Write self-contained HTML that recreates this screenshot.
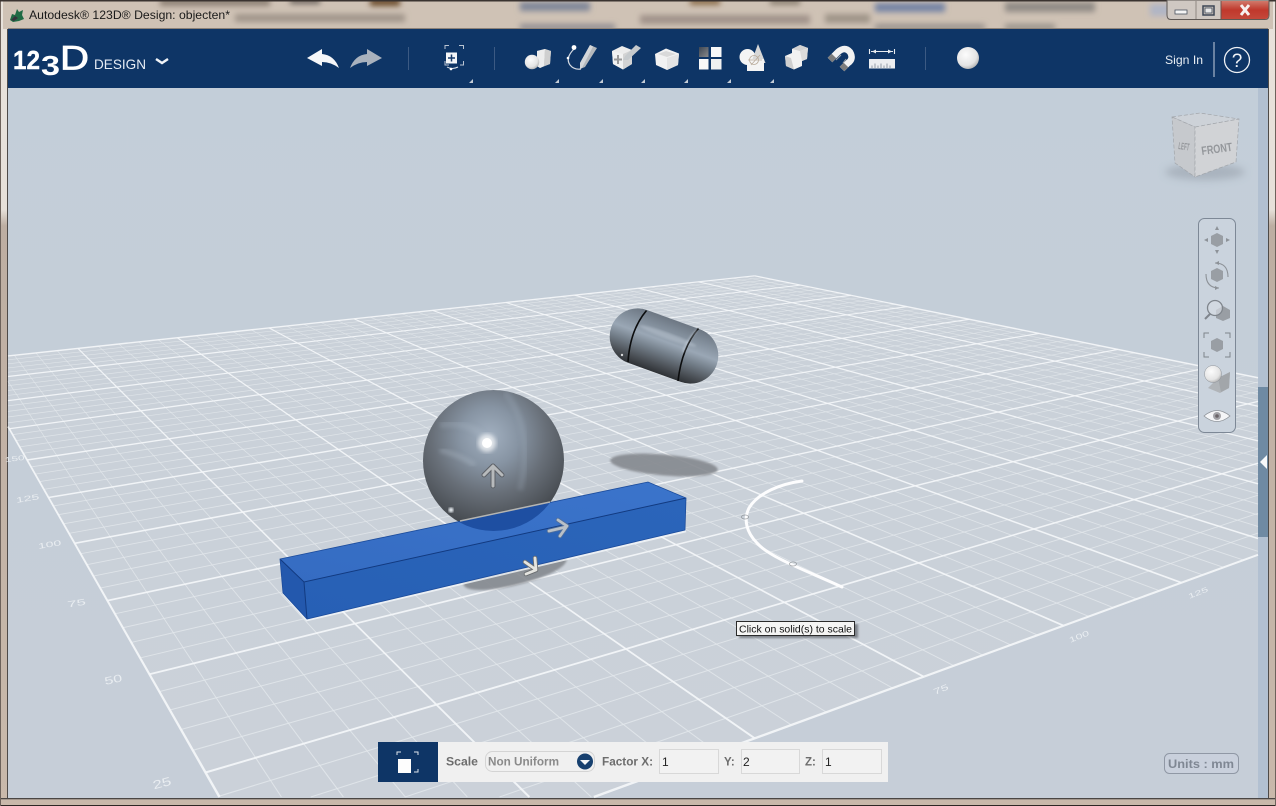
<!DOCTYPE html>
<html><head><meta charset="utf-8"><title>Autodesk 123D Design</title>
<style>
html,body{margin:0;padding:0;background:#c9b9ab;width:1276px;height:806px;overflow:hidden}
svg{display:block;position:absolute;left:0;top:0}
#root{filter:blur(.35px)}
text{font-family:"Liberation Sans",sans-serif}
</style></head><body>
<svg id="root" xmlns="http://www.w3.org/2000/svg" width="1276" height="806" viewBox="0 0 1276 806">
<defs>
<linearGradient id="frame" x1="0" y1="0" x2="0" y2="1"><stop offset="0" stop-color="#e8e2db"/><stop offset=".26" stop-color="#e6e0d9"/><stop offset=".28" stop-color="#bdaea2"/><stop offset="1" stop-color="#c9b9ab"/></linearGradient>
<linearGradient id="vp" x1="0" y1="0" x2="0" y2="1"><stop offset="0" stop-color="#c3ced9"/><stop offset=".5" stop-color="#c5ced8"/><stop offset="1" stop-color="#c6ced8"/></linearGradient>
<radialGradient id="sph" cx=".47" cy=".33" r=".74"><stop offset="0" stop-color="#a2b0c0"/><stop offset=".28" stop-color="#8794a3"/><stop offset=".55" stop-color="#686f78"/><stop offset=".8" stop-color="#4d5258"/><stop offset="1" stop-color="#35383c"/></radialGradient>
<linearGradient id="cap" x1="0" y1="0" x2="0" y2="1"><stop offset="0" stop-color="#6d7783"/><stop offset=".2" stop-color="#828e9b"/><stop offset=".42" stop-color="#9aa7b5"/><stop offset=".62" stop-color="#737e89"/><stop offset=".85" stop-color="#4a4f55"/><stop offset="1" stop-color="#2f3236"/></linearGradient>
<linearGradient id="topf" x1="0" y1="1" x2="1" y2="0"><stop offset="0" stop-color="#356cc2"/><stop offset="1" stop-color="#3b74cb"/></linearGradient>
<linearGradient id="frontf" x1="0" y1="1" x2="1" y2="0"><stop offset="0" stop-color="#2760b5"/><stop offset="1" stop-color="#2b65ba"/></linearGradient>
<radialGradient id="ball" cx=".4" cy=".35" r=".7"><stop offset="0" stop-color="#fcfcfc"/><stop offset=".7" stop-color="#e4e4e4"/><stop offset="1" stop-color="#aeaeae"/></radialGradient>
<linearGradient id="tl" x1="0" y1="0" x2="1" y2="1"><stop offset="0" stop-color="#3d4653"/><stop offset="1" stop-color="#8a8a8a"/></linearGradient>
<linearGradient id="close" x1="0" y1="0" x2="0" y2="1"><stop offset="0" stop-color="#d0796a"/><stop offset=".5" stop-color="#c0382c"/><stop offset="1" stop-color="#c4483a"/></linearGradient>
<filter id="b1"><feGaussianBlur stdDeviation="1"/></filter>
<filter id="b2"><feGaussianBlur stdDeviation="2"/></filter>
<filter id="b3" x="-20%" y="-100%" width="140%" height="300%"><feGaussianBlur stdDeviation="3"/></filter>
<filter id="b4" x="-30%" y="-100%" width="160%" height="300%"><feGaussianBlur stdDeviation="4"/></filter>
<clipPath id="tb"><rect x="3" y="1" width="1270" height="28"/></clipPath>
<clipPath id="sphclip"><circle cx="493.500" cy="460.500" r="70.500"/></clipPath>
</defs>

<!-- window frame -->
<rect width="1276" height="806" fill="url(#frame)"/>
<rect x="0" y="805" width="1276" height="1" fill="#2e2825"/>
<rect x="0" y="798" width="1276" height="1.300" fill="#4a4644"/>
<rect x="0" y="0" width="1" height="806" fill="#6d625b"/>
<rect x="1275" y="0" width="1" height="806" fill="#6d625b"/>

<!-- blurred title bar content -->
<g clip-path="url(#tb)">
<rect x="0" y="0" width="1276" height="29" fill="#cfc2b5"/>
<g filter="url(#b3)">
<rect x="160" y="-2" width="110" height="8" fill="#8f8276"/>
<rect x="290" y="-2" width="30" height="6" fill="#6f6660"/>
<rect x="370" y="-2" width="30" height="8" fill="#6d4d2d"/>
<rect x="235" y="14" width="170" height="8" fill="#a0958a"/>
<rect x="520" y="2" width="70" height="9" fill="#7f8698"/>
<rect x="520" y="24" width="95" height="6" fill="#8f8c92"/>
<rect x="640" y="15" width="170" height="9" fill="#a0938a"/>
<rect x="825" y="14" width="45" height="9" fill="#9f9488"/>
<rect x="875" y="3" width="70" height="9" fill="#7583a4"/>
<rect x="1005" y="2" width="90" height="10" fill="#918b86"/>
<rect x="875" y="24" width="110" height="6" fill="#97918c"/>
<rect x="1005" y="24" width="50" height="6" fill="#97928a"/>
<rect x="690" y="-2" width="30" height="7" fill="#8d6f4e"/>
<rect x="770" y="-2" width="30" height="7" fill="#8f8476"/>
<rect x="1150" y="4" width="20" height="12" fill="#b0b5c5"/>
</g>
</g>
<rect x="0" y="0" width="1276" height="1.500" fill="#3a3330"/>
<rect x="8" y="28" width="1260" height="1" fill="#8d8278"/>

<!-- title -->
<g>
<path d="M10 20 L12 14 L15 15 L17 9 L19 12 L23 10 L22 15 L24 19 L19 21 L13 22Z" fill="#1f6b45"/>
<path d="M11 20 L15 16 L18 18 L14 21Z" fill="#34343c"/>
<text x="29" y="19" font-size="12" textLength="201" lengthAdjust="spacingAndGlyphs" fill="#1a1a1a">Autodesk® 123D® Design: objecten*</text>
</g>

<!-- window buttons -->
<g>
<path d="M1167 0 H1269 V15 Q1269 19.500 1265 19.500 H1171 Q1167 19.500 1167 15Z" fill="#cfc8c2" stroke="#5e5854" stroke-width="1"/>
<path d="M1221 1 H1268.500 V15 Q1268.500 19 1265 19 H1221Z" fill="url(#close)"/>
<line x1="1196" y1="1" x2="1196" y2="19" stroke="#8f8883"/>
<line x1="1221" y1="1" x2="1221" y2="19" stroke="#70504a"/>
<rect x="1175" y="10" width="12" height="4" fill="#f4f4f4" stroke="#4a5360" stroke-width=".8"/>
<rect x="1203" y="6" width="11" height="9" fill="none" stroke="#3c4654" stroke-width="1.500"/>
<rect x="1205" y="8" width="7" height="5" fill="#e8e8e8" stroke="#3c4654" stroke-width=".8"/>
<path d="M1241 5 L1249 15 M1249 5 L1241 15" stroke="#f6f0ee" stroke-width="3"/>
</g>

<!-- viewport -->
<rect x="8" y="88" width="1260" height="710" fill="url(#vp)"/>
<rect x="1258" y="88" width="10" height="710" fill="#b2c0d1"/>
<rect x="1258" y="387" width="10" height="150" fill="#6f8aa3"/>
<polygon points="1260,462 1267,455 1267,469" fill="#f7f9fb"/>
<line x1="1268.500" y1="29" x2="1268.500" y2="798" stroke="#4e4a48"/>
<line x1="7.500" y1="29" x2="7.500" y2="798" stroke="#4e4a48"/>

<polygon points="220,798 591,798 1258,555 1258,378 755,276 8,356 8,427" fill="#d0d4da" opacity=".5"/>
<g id="grid"></g>
<!-- grid labels -->
<g fill="#e9edf1" font-size="14">
<text transform="translate(15,461) rotate(-7) scale(.85,.5)" text-anchor="middle">150</text>
<text transform="translate(28,501) rotate(-9) scale(1,.55)" text-anchor="middle">125</text>
<text transform="translate(50,547) rotate(-9) scale(1,.55)" text-anchor="middle">100</text>
<text transform="translate(77,606) rotate(-9) scale(1.2,.62)" text-anchor="middle">75</text>
<text transform="translate(114,683) rotate(-12) scale(1.15,.75)" text-anchor="middle">50</text>
<text transform="translate(163,787) rotate(-15) scale(1.2,.85)" text-anchor="middle">25</text>
<text transform="translate(1199,595) rotate(-22) scale(.9,.5)" text-anchor="middle">125</text>
<text transform="translate(1080,639) rotate(-22) scale(.9,.55)" text-anchor="middle">100</text>
<text transform="translate(942,692) rotate(-22) scale(1,.6)" text-anchor="middle">75</text>
</g>

<!-- shadows -->
<ellipse cx="664" cy="465" rx="54" ry="10.500" transform="rotate(5 664 465)" fill="#85898f" opacity=".9" filter="url(#b1)"/>
<ellipse cx="515" cy="572" rx="53" ry="13" transform="rotate(-14 515 572)" fill="#85898f" opacity=".9" filter="url(#b1)"/>

<!-- capsule -->
<g>
<rect x="608" y="318" width="112" height="56" rx="28" transform="rotate(20 664 346)" fill="url(#cap)"/>
<ellipse cx="668" cy="336" rx="30" ry="3" transform="rotate(20 668 336)" fill="#b9c4d0" opacity=".5" filter="url(#b1)"/>
<circle cx="622" cy="355" r="1.200" fill="#fff" opacity=".8"/>
<path d="M646.500 310.500 Q630 330 628 362" fill="none" stroke="#0c0d0e" stroke-width="1.600"/>
<path d="M698.500 328.500 Q682 347 678 381" fill="none" stroke="#0c0d0e" stroke-width="1.600"/>
<path d="M697 330 Q687 340 683 352" fill="none" stroke="#d7e0ea" stroke-width="1.500" opacity=".6" filter="url(#b1)"/>
</g>

<!-- sphere -->
<circle cx="493.500" cy="460.500" r="70.500" fill="url(#sph)"/>
<g clip-path="url(#sphclip)">
<path d="M505 392 Q535 430 520 490" fill="none" stroke="#a9b8c7" stroke-width="6" opacity=".22" filter="url(#b2)"/>
<path d="M440 425 Q475 420 490 445" fill="none" stroke="#b3c1cf" stroke-width="7" opacity=".22" filter="url(#b2)"/>
<path d="M440 450 Q460 455 475 465" fill="none" stroke="#bac6d2" stroke-width="5" opacity=".3" filter="url(#b2)"/>
</g>
<circle cx="487" cy="443" r="9" fill="#fff" opacity=".7" filter="url(#b2)"/>
<circle cx="487" cy="443" r="5" fill="#fff"/>
<circle cx="451" cy="510" r="2.500" fill="#e8edf2" filter="url(#b1)"/>

<!-- bar -->
<g>
<path d="M283 593 L307 620 L686 531" fill="none" stroke="#f4f7fa" stroke-width="2.500" opacity=".8"/>
<polygon points="280,559 304,582 307,619 283,593" fill="#2358ad"/>
<polygon points="304,582 686,498 685,530 307,619" fill="url(#frontf)"/>
<polygon points="280,559 648,482 686,498 304,582" fill="url(#topf)"/>
<g clip-path="url(#sphclip)"><polygon points="280,559 648,482 686,498 304,582" fill="#1e4fa2"/></g>
<path d="M280 559 L304 582 L686 498 M304 582 L307 619" fill="none" stroke="#123a80" stroke-width="1"/>
<path d="M280 559 L648 482 L686 498 L685 530 L307 619 L283 593Z" fill="none" stroke="#1c4c9c" stroke-width=".8"/>
<line x1="460" y1="521" x2="550" y2="502" stroke="#b5b5b2" stroke-width="1.500"/>
</g>

<!-- gizmo arrows -->
<g fill="none" stroke-linecap="round" stroke-linejoin="round">
<path d="M493 486 V467 M484 475 L493 466 L502 475" stroke="#5c6066" stroke-width="5"/>
<path d="M493 486 V467 M484 475 L493 466 L502 475" stroke="#b7babc" stroke-width="3"/>
<path d="M549 531 L566 527 M558 520 L567 526 L560 536" stroke="#4f6f9d" stroke-width="4.500"/>
<path d="M549 531 L566 527 M558 520 L567 526 L560 536" stroke="#b9c0c7" stroke-width="2.800"/>
<path d="M525 562 L535 569 M535 558 L536 570 L526 574" stroke="#6a6d70" stroke-width="4.500"/>
<path d="M525 562 L535 569 M535 558 L536 570 L526 574" stroke="#e4e4e0" stroke-width="2.800"/>
</g>

<!-- sketch curve -->
<path d="M802 481 C780 484 758 493 749 508 C743 520 747 533 757 543 C770 558 810 572 842 587" fill="none" stroke="#fdfdfe" stroke-width="3" stroke-linecap="round"/>
<g fill="none" stroke="#7d8186" stroke-width=".8" opacity=".7"><ellipse cx="745" cy="517" rx="3.500" ry="2"/><ellipse cx="793" cy="564" rx="3.500" ry="2"/></g>

<!-- tooltip -->
<rect x="739" y="624" width="119" height="14" fill="#5c6166" opacity=".7" filter="url(#b1)"/>
<rect x="736.500" y="621.500" width="118" height="14" fill="#f5f5f4" stroke="#2b2b2b" stroke-width="1"/>
<text x="739" y="632.500" font-size="10.500" textLength="113" lengthAdjust="spacingAndGlyphs" fill="#111">Click on solid(s) to scale</text>

<!-- header -->
<rect x="8" y="29" width="1260" height="59" fill="#0e3566"/>

<!-- logo -->
<g fill="#fff">
<text x="13" y="69" font-size="26" font-weight="bold" stroke="#fff" stroke-width=".4" textLength="27" lengthAdjust="spacingAndGlyphs">12</text>
<text x="41" y="75" font-size="28" font-weight="bold" textLength="19" lengthAdjust="spacingAndGlyphs">3</text>
<text x="60" y="69.500" font-size="34" stroke="#fff" stroke-width=".8" textLength="29" lengthAdjust="spacingAndGlyphs">D</text>
<text x="94" y="69" font-size="14" textLength="52" lengthAdjust="spacingAndGlyphs" fill="#e6ecf4">DESIGN</text>
<path d="M156 59 L162 63 L168 59" fill="none" stroke="#f1f4f8" stroke-width="2.500"/>
</g>

<!-- undo redo -->
<path d="M307 58 L322 49 L322 54 Q334 55 339 68 Q331 62 322 62 L322 66Z" fill="#f6f7f9"/>
<path d="M382 58 L367 49 L367 54 Q355 55 350 68 Q358 62 367 62 L367 66Z" fill="#a9b2be"/>
<line x1="408.500" y1="47" x2="408.500" y2="70" stroke="#3c5a83"/>
<line x1="494.500" y1="47" x2="494.500" y2="70" stroke="#3c5a83"/>
<line x1="925.500" y1="47" x2="925.500" y2="70" stroke="#3c5a83"/>
<line x1="1214" y1="42" x2="1214" y2="77" stroke="#c6d0dd" stroke-width="1"/>

<!-- bracket icon -->
<g fill="none" stroke="#b9c4d2" stroke-width="1">
<path d="M445 49 V45.500 H449 M459 45.500 H463.500 V49 M445 61 V65 H449 M460 65 H463.500 V61"/>
<path d="M447 67 Q452 70 458 67" stroke="#e4e9ef"/>
</g>
<rect x="446" y="52.500" width="11" height="11" fill="#f4f6f8"/>
<path d="M451.500 54.500 V61.500 M448 58 H455" stroke="#163a69" stroke-width="1.500"/>
<circle cx="451" cy="69" r="1.300" fill="#fff"/>

<!-- primitive -->
<polygon points="537,51 545,49 551,51 550,64 540,68 537,66" fill="#c6c6c6"/>
<polygon points="537,51 545,49 544,66 540,68 537,66" fill="#ededed"/>
<polygon points="545,49 551,51 550,64 544,66" fill="#cfcfcf"/>
<circle cx="532" cy="62" r="7.200" fill="url(#ball)"/>

<!-- sketch -->
<path d="M574 49 Q565 58 570 65 Q574 70 581 69" fill="none" stroke="#d5dbe3" stroke-width="1.200"/>
<circle cx="574" cy="47.500" r="2.400" fill="#fff"/>
<circle cx="568" cy="58" r="1.300" fill="#fff"/>
<polygon points="590,45 597,48 585,67 580,69 580,63" fill="#b4b8bc"/>
<polygon points="590,45 593,46.500 582,68 580,69 580,63" fill="#d4d7da"/>

<!-- construct -->
<polygon points="612,51 622,46 632,50 632,64 623,69.500 613,64" fill="#ececec"/>
<polygon points="623,54 632,50 632,64 623,69.500" fill="#d4d4d4"/>
<polygon points="612,51 623,54 623,69.500 613,64" fill="#f2f2f2"/>
<path d="M618 55 V64 M614 59.500 H622" stroke="#9a9a9a" stroke-width="2"/>
<polygon points="636,45 641,48 628,60 623,60 625,56" fill="#c6cacd"/>

<!-- modify -->
<polygon points="655,54 666,48.500 679,53.500 678,65 667,70 656,65" fill="#f2f2f2"/>
<polygon points="658,54 666,51 676,54 667,57" fill="#d9d9d9"/>
<polygon points="667,58 679,54 678,65 667,70" fill="#e4e4e4"/>

<!-- grid -->
<rect x="699" y="47" width="9.500" height="10" fill="url(#tl)"/>
<rect x="711" y="47" width="10.500" height="10" fill="#f8f8f8"/>
<rect x="699" y="59" width="9.500" height="10.500" fill="#f8f8f8"/>
<rect x="711" y="59" width="10.500" height="10.500" fill="#f0f0f0"/>

<!-- combine -->
<circle cx="747.500" cy="57" r="8" fill="#f4f4f4"/>
<polygon points="758,44 765.500,63 751,63" fill="#d7d7d7"/>
<rect x="747" y="59" width="17" height="12" fill="#f4f4f4"/>
<circle cx="754" cy="60" r="4.500" fill="none" stroke="#b8a998" stroke-width=".8"/>
<path d="M751 65 L760 55 M748 60 H762" stroke="#b8a998" stroke-width=".7"/>

<!-- snap -->
<polygon points="785,56 792,53 792,49 800,45 808,48 807,59 802,61 802,66 794,69.500 786,66" fill="#f2f2f2"/>
<polygon points="792,49 800,45 808,48 800,51" fill="#d2d2d2"/>
<polygon points="800,51 808,48 807,59 802,61" fill="#dcdcdc"/>
<polygon points="785,56 791,58 794,69.500 786,66" fill="#cfcfcf"/>

<!-- magnet -->
<path d="M830 60 L838 52 Q845 46 850 52 Q854 59 848 63 L842 69" fill="none" stroke="#f2f2f2" stroke-width="6.500"/>
<path d="M830 60 L834 56 M842 69 L846 65" fill="none" stroke="#7d7d7d" stroke-width="6.500"/>
<path d="M836 60 L841 55 M843 63 L846 59" fill="none" stroke="#9a9fa5" stroke-width="1"/>

<!-- ruler -->
<path d="M869.500 49 V54 M894.500 49 V54 M871 51.500 H893" stroke="#e8ecf0" stroke-width="1.100" fill="none"/>
<path d="M872 51.500 L876 49.500 V53.500Z M892 51.500 L888 49.500 V53.500Z" fill="#e8ecf0"/>
<rect x="869" y="59" width="26" height="9.500" fill="#eceef0"/>
<path d="M872 68 V65.500 M875 68 V63.500 M878 68 V65.500 M881 68 V63.500 M884 68 V65.500 M887 68 V63.500 M890 68 V65.500" stroke="#7c8794" stroke-width=".8"/>

<!-- small triangles -->
<g fill="#c4ccd6">
<polygon points="473,79 473,83 469,83"/>
<polygon points="559,79 559,83 555,83"/>
<polygon points="603,79 603,83 599,83"/>
<polygon points="645,79 645,83 641,83"/>
<polygon points="688,79 688,83 684,83"/>
<polygon points="731,79 731,83 727,83"/>
<polygon points="774,79 774,83 770,83"/>
</g>

<circle cx="968" cy="58" r="11" fill="url(#ball)"/>

<text x="1165" y="64" font-size="12" textLength="38" lengthAdjust="spacingAndGlyphs" fill="#e8edf3">Sign In</text>
<circle cx="1237" cy="60" r="12.500" fill="none" stroke="#eef1f5" stroke-width="1.300"/>
<text x="1237" y="67" font-size="19" text-anchor="middle" fill="#f2f5f8">?</text>

<!-- view cube -->
<ellipse cx="1205" cy="172" rx="40" ry="8" fill="#8f98a3" opacity=".5" filter="url(#b4)"/>
<polygon points="1172,117 1200,113 1239,119 1195,127" fill="#cdd2d8" stroke="#a2a6ab" stroke-width=".7" stroke-dasharray="4 2"/>
<polygon points="1172,117 1195,127 1195,177 1175,163" fill="#c6c9cd" stroke="#a2a6ab" stroke-width=".7" stroke-dasharray="4 2"/>
<polygon points="1195,127 1239,119 1236,162 1195,177" fill="#d1d3d6" stroke="#a2a6ab" stroke-width=".7" stroke-dasharray="4 2"/>
<text transform="translate(1202,155) rotate(-8)" font-size="12" font-weight="bold" textLength="31" lengthAdjust="spacingAndGlyphs" fill="#94979b">FRONT</text>
<text transform="translate(1178,149) rotate(8)" font-size="10" font-weight="bold" textLength="11" lengthAdjust="spacingAndGlyphs" fill="#94979b">LEFT</text>

<!-- nav panel -->
<rect x="1198.500" y="218.500" width="37" height="214" rx="6" fill="#cad3dd" stroke="#7d8896" stroke-width="1"/>
<g>
<!-- pan -->
<polygon points="1217,233 1223,236 1223,244 1217,247 1211,244 1211,236" fill="#999ea4"/>
<path d="M1217,226 l-2,4 h4Z M1217,254 l-2,-4 h4Z M1204,240 l4,-2 v4Z M1230,240 l-4,-2 v4Z" fill="#8d9298"/>
<!-- orbit -->
<polygon points="1217,268 1223,271 1223,279 1217,282 1211,279 1211,271" fill="#999ea4"/>
<path d="M1215 263 Q1228 263 1228 277 M1219 288 Q1206 288 1206 274" fill="none" stroke="#8d9298" stroke-width="1.100"/>
<path d="M1215,263 l4,-2 v4Z M1219,288 l-4,2 v-4Z" fill="#8d9298"/>
<!-- zoom -->
<polygon points="1223,306 1230,310 1230,318 1223,321 1216,318 1216,310" fill="#999ea4"/>
<circle cx="1215" cy="308" r="7.500" fill="#d6dce2" fill-opacity=".7" stroke="#7f858c" stroke-width="1.300"/>
<path d="M1210 314 L1205 319" stroke="#7f858c" stroke-width="2"/>
<!-- fit -->
<polygon points="1217,338 1223,341 1223,349 1217,352 1211,349 1211,341" fill="#999ea4"/>
<path d="M1204 338 V333 H1209 M1225 333 H1230 V338 M1204 352 V357 H1209 M1225 357 H1230 V352" fill="none" stroke="#7f858c" stroke-width="1"/>
<!-- material -->
<polygon points="1208,388 1218,378 1230,372 1229,388 1220,393" fill="#b0b4b8"/>
<polygon points="1218,378 1230,372 1229,388 1221,392" fill="#a2a6aa"/>
<circle cx="1213" cy="374" r="8.500" fill="url(#ball)" stroke="#8d9298" stroke-width=".5"/>
<!-- eye -->
<path d="M1204 416 Q1217 405 1230 416 Q1217 427 1204 416Z" fill="#f4f5f7" stroke="#8d9298" stroke-width=".8"/>
<circle cx="1217" cy="416" r="4" fill="#a3a3a7"/><circle cx="1217" cy="416" r="1.800" fill="#6a6468"/>
</g>

<!-- scale panel -->
<rect x="378" y="742" width="510" height="40" fill="#f0f0f0"/>
<rect x="378" y="742" width="60" height="40" fill="#0e3566"/>
<rect x="398" y="759" width="13" height="14" fill="#fdfdfd"/>
<path d="M397 755 V752 H401 M414 752 H418 V755 M414 772 H418 V769" fill="none" stroke="#dfe5ec" stroke-width="1"/>
<g font-size="11.500" font-weight="bold" fill="#6d6d6d">
<text x="446" y="765.500" textLength="32" lengthAdjust="spacingAndGlyphs">Scale</text>
<text x="602" y="765.500" textLength="51" lengthAdjust="spacingAndGlyphs">Factor X:</text>
<text x="724" y="765.500">Y:</text>
<text x="805" y="765.500">Z:</text>
</g>
<rect x="485.500" y="751.500" width="109" height="20" rx="7" fill="#f0f0f0" stroke="#d4d4d4"/>
<text x="488" y="765.500" font-size="11.500" font-weight="bold" fill="#8a8a8a" textLength="71" lengthAdjust="spacingAndGlyphs">Non Uniform</text>
<circle cx="585" cy="761.500" r="8" fill="#17406f"/>
<polygon points="580,760 590,760 585,765" fill="#f4f6f8"/>
<g fill="#f2f2f2" stroke="#d8d8d8">
<rect x="659.500" y="749.500" width="59" height="24"/>
<rect x="741.500" y="749.500" width="58" height="24"/>
<rect x="822.500" y="749.500" width="59" height="24"/>
</g>
<g font-size="12" fill="#222">
<text x="662" y="766">1</text><text x="743" y="766">2</text><text x="825" y="766">1</text>
</g>

<!-- units -->
<rect x="1164.500" y="753.500" width="74" height="20" rx="5" fill="#c9d0dc" stroke="#9098a5"/>
<text x="1201" y="768" font-size="12" font-weight="bold" fill="#7f8793" text-anchor="middle" textLength="66" lengthAdjust="spacingAndGlyphs">Units : mm</text>
</svg>
<script>
(function(){
var F=[284,910],R=[1570,441],L=[-30,360],wR=2.31,wL=3;
function P(a,b){var w=1+(wR-1)*a+(wL-1)*b;
 return [(F[0]+a*(wR*R[0]-F[0])+b*(wL*L[0]-F[0]))/w,(F[1]+a*(wR*R[1]-F[1])+b*(wL*L[1]-F[1]))/w,w];}
var g=document.getElementById('grid'),ns='http://www.w3.org/2000/svg';
var X0=8,X1=1258,Y0=88,Y1=797;
function clip(p,q){
 var t0=0,t1=1,dx=q[0]-p[0],dy=q[1]-p[1];
 var ps=[-dx,dx,-dy,dy],qs=[p[0]-X0,X1-p[0],p[1]-Y0,Y1-p[1]];
 for(var i=0;i<4;i++){
  if(ps[i]===0){if(qs[i]<0)return null;continue;}
  var r=qs[i]/ps[i];
  if(ps[i]<0){if(r>t1)return null;if(r>t0)t0=r;}
  else{if(r<t0)return null;if(r<t1)t1=r;}
 }
 function at(t){var iw=(1-t)/p[2]+t/q[2];return [p[0]+dx*t,p[1]+dy*t,1/iw];}
 return [at(t0),at(t1)];
}
function line(p0,q0,h,c,o){
 var s=clip(p0,q0);if(!s)return;
 var p=s[0],q=s[1];
 var dx=q[0]-p[0],dy=q[1]-p[1],l=Math.sqrt(dx*dx+dy*dy);if(l<.01)return;
 var nx=-dy/l,ny=dx/l;
 var h1=h/Math.pow(p[2],.55),h2=h/Math.pow(q[2],.55);
 var e=document.createElementNS(ns,'polygon');
 e.setAttribute('points',[p[0]+nx*h1,p[1]+ny*h1,q[0]+nx*h2,q[1]+ny*h2,q[0]-nx*h2,q[1]-ny*h2,p[0]-nx*h1,p[1]-ny*h1].map(function(v){return v.toFixed(2)}).join(' '));
 e.setAttribute('fill',c);e.setAttribute('opacity',o);g.appendChild(e);
}
var N=50,i,t;
for(i=0;i<=N;i++){ if(i%5===0)continue; t=i/N;
 line(P(t,0),P(t,1),.6,'#e4e8ec',.8);
 line(P(0,t),P(1,t),.6,'#e4e8ec',.8);
}
for(i=0;i<=N;i+=5){ t=i/N;
 var h=(i===0||i===N)?1.35:1.1;
 line(P(t,0),P(t,1),h,'#f5f7f9',.9);
 line(P(0,t),P(1,t),h,'#f5f7f9',.9);
}
})();
</script>
</body></html>
